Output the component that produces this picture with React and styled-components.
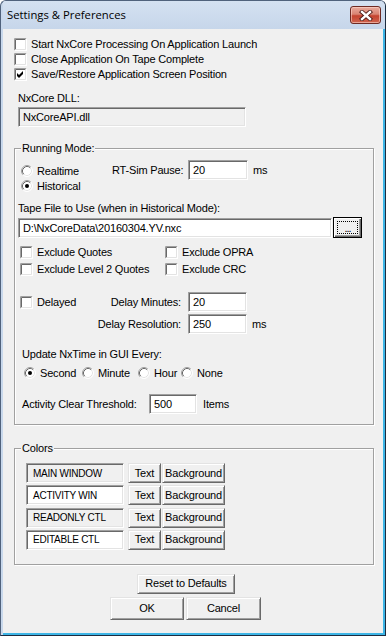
import React from 'react';
import styled, { createGlobalStyle } from 'styled-components';

const GlobalStyle = createGlobalStyle`
  html, body { margin: 0; padding: 0; background: #ffffff; }
  body { font-family: "Liberation Sans", Arial, sans-serif; font-size: 11px; letter-spacing: -0.18px; color: #000; }
  * { box-sizing: border-box; }
`;

const Window = styled.div`
  width: 386px;
  height: 636px;
  display: flex;
  flex-direction: column;
  background: #c8d8ec;
  border: 1px solid #50627c;
  border-right-color: #1c2c40;
  border-bottom-color: #1c2c40;
  border-radius: 6px 6px 0 0;
  padding-left: 2px;
  overflow: hidden;
`;

const TitleBar = styled.div`
  height: 28px;
  flex: none;
  display: flex;
  align-items: flex-start;
  justify-content: space-between;
  padding: 5px 4px 0 4px;
  background: linear-gradient(#d4e1f1, #c6d6ea);
`;

const TitleText = styled.span`
  font-family: "Open Sans", "Noto Sans", sans-serif;
  font-size: 11.3px;
  letter-spacing: 0;
  line-height: 18px;
  color: #000;
`;

const CloseButton = styled.div`
  width: 31px;
  height: 18px;
  border: 1px solid #6e2a23;
  border-radius: 3px;
  background: linear-gradient(#e9aa9d 0%, #d98472 45%, #c4432e 55%, #cf6550 100%);
  box-shadow: inset 0 0 0 1px rgba(255, 220, 210, 0.55);
  display: flex;
  align-items: center;
  justify-content: center;
`;

const Client = styled.div`
  flex: 1;
  display: flex;
  flex-direction: column;
  background: #f0f0f0;
  border-right: 2px solid #3db5e6;
  border-bottom: 2px solid #3db5e6;
  padding: 8px 9px 0 11px;
`;

const CheckRow = styled.label`
  display: flex;
  align-items: center;
  height: ${p => p.$h || 15}px;
  line-height: 13px;
  white-space: nowrap;
`;

const BoxText = styled.span`
  margin-left: ${p => p.$gap ?? 4}px;
`;

const Label = styled.div`
  line-height: 13px;
  margin-top: ${p => p.$mt || 0}px;
  margin-left: ${p => p.$ml || 0}px;
  white-space: nowrap;
`;

const Field = styled.div`
  height: ${p => p.$h || 20}px;
  width: ${p => p.$w}px;
  margin-top: ${p => p.$mt || 0}px;
  margin-left: ${p => p.$ml || 0}px;
  flex: none;
  background: ${p => (p.$readonly ? '#f0f0f0' : '#ffffff')};
  border: 1px solid;
  border-color: #a0a0a0 #ffffff #ffffff #a0a0a0;
  box-shadow: inset 1px 1px 0 #696969, inset -1px -1px 0 #e3e3e3;
  padding-left: 4px;
  display: flex;
  align-items: center;
  line-height: 13px;
  white-space: nowrap;
  overflow: hidden;
`;

const Group = styled.div`
  position: relative;
  margin-top: ${p => p.$mt}px;
  border: 1px solid #a0a0a0;
  box-shadow: inset 1px 1px 0 #ffffff, 1px 1px 0 #ffffff;
  padding: ${p => p.$pad};
  display: flex;
  flex-direction: column;
`;

const Legend = styled.span`
  position: absolute;
  top: -7px;
  left: 6px;
  padding: 0 1px;
  line-height: 13px;
  background: #f0f0f0;
`;

const ModeRow = styled.div`
  display: flex;
  align-items: flex-start;
`;

const RadioColumn = styled.div`
  width: 91px;
  margin-left: 3px;
  margin-top: 3px;
  display: flex;
  flex-direction: column;
`;

const InlineLabel = styled.span`
  width: ${p => p.$w}px;
  line-height: 20px;
  text-align: ${p => p.$align || 'left'};
  flex: none;
  white-space: nowrap;
`;

const Unit = styled.span`
  margin-left: ${p => p.$ml || 5}px;
  line-height: 20px;
`;

const TapeRow = styled.div`
  display: flex;
  align-items: flex-start;
  margin-top: 2px;
`;

const Button = styled.button`
  font: inherit;
  font-family: "Liberation Sans", Arial, sans-serif;
  font-size: 11px;
  letter-spacing: -0.18px;
  color: #000;
  margin: 0;
  margin-top: ${p => p.$mt || 0}px;
  margin-left: ${p => p.$ml || 0}px;
  width: ${p => p.$w}px;
  height: ${p => p.$h || 20}px;
  padding: 0;
  flex: none;
  align-self: flex-start;
  background: #f0f0f0;
  border: 1px solid;
  border-color: #e3e3e3 #696969 #696969 #e3e3e3;
  box-shadow: inset 1px 1px 0 #ffffff, inset -1px -1px 0 #a0a0a0;
  line-height: 13px;
  display: flex;
  align-items: center;
  justify-content: center;
`;

const BrowseButton = styled(Button)`
  border: 1px solid #000;
  box-shadow: inset 1px 1px 0 #ffffff, inset -1px -1px 0 #696969, inset -2px -2px 0 #a0a0a0;
  padding: 3px;
`;

const FocusRect = styled.span`
  flex: 1;
  align-self: stretch;
  border: 1px dotted #000;
  display: flex;
  align-items: flex-end;
  justify-content: center;
  line-height: 9px;
  font-size: 11px;
  letter-spacing: -1px;
`;

const ExcludeGrid = styled.div`
  display: grid;
  grid-template-columns: 145px auto;
  grid-auto-rows: 17px;
  margin-top: 6px;
  margin-left: 2px;
`;

const DelayGrid = styled.div`
  display: grid;
  grid-template-columns: 75px 86px 66px auto;
  grid-auto-rows: 20px;
  row-gap: 2px;
  margin-top: 14px;
  margin-left: 2px;
  align-items: center;
`;

const RadioRow = styled.div`
  display: flex;
  margin-top: 4px;
  margin-left: 6px;
`;

const RadioItem = styled.label`
  display: flex;
  align-items: center;
  height: 15px;
  width: ${p => (p.$w ? `${p.$w}px` : 'auto')};
  flex: none;
  white-space: nowrap;
`;

const ActivityRow = styled.div`
  display: flex;
  align-items: center;
  margin-top: 14px;
  margin-left: 4px;
`;

const ColorRows = styled.div`
  display: flex;
  flex-direction: column;
  gap: 2.33px;
  margin-left: 8px;
`;

const ColorRow = styled.div`
  display: flex;
  align-items: center;
`;

const ColorName = styled(Field)`
  font-size: 10px;
  padding-left: 6px;
  letter-spacing: -0.25px;
`;

const Check = ({ checked }) => (
  <svg width="13" height="13" viewBox="0 0 13 13" style={{ flex: 'none' }}>
    <rect x="0" y="0" width="13" height="13" fill="#ffffff" />
    <path d="M0.5 12.5V0.5H12.5" stroke="#a0a0a0" fill="none" />
    <path d="M1.5 11.5V1.5H11.5" stroke="#696969" fill="none" />
    <path d="M1.5 11.5H11.5V1.5" stroke="#e3e3e3" fill="none" />
    <path d="M0.5 12.5H12.5V0.5" stroke="#ffffff" fill="none" />
    {checked && <path d="M3 5L5 7L9 3L9 6L5 10L3 8Z" fill="#000" />}
  </svg>
);

const Radio = ({ checked }) => (
  <svg width="12" height="12" viewBox="0 0 12 12" style={{ flex: 'none' }}>
    <circle cx="6" cy="6" r="5" fill="#ffffff" />
    <path d="M2.11 9.89A5.5 5.5 0 0 1 9.89 2.11" stroke="#a0a0a0" fill="none" />
    <path d="M2.82 9.18A4.5 4.5 0 0 1 9.18 2.82" stroke="#696969" fill="none" />
    <path d="M9.18 2.82A4.5 4.5 0 0 1 2.82 9.18" stroke="#e3e3e3" fill="none" />
    <path d="M9.89 2.11A5.5 5.5 0 0 1 2.11 9.89" stroke="#ffffff" fill="none" />
    {checked && <circle cx="6" cy="6" r="2" fill="#000" />}
  </svg>
);

const CloseGlyph = () => (
  <svg width="14" height="11" viewBox="0 0 14 11">
    <path d="M3 2L11 9M11 2L3 9" stroke="#4a1a15" strokeWidth="4.2" strokeLinecap="square" />
    <path d="M3 2L11 9M11 2L3 9" stroke="#ffffff" strokeWidth="2.4" strokeLinecap="square" />
  </svg>
);

const colorRows = [
  { name: 'MAIN WINDOW', readonly: true },
  { name: 'ACTIVITY WIN', readonly: false },
  { name: 'READONLY CTL', readonly: true },
  { name: 'EDITABLE CTL', readonly: false },
];

export default function App() {
  return (
    <>
      <GlobalStyle />
      <Window>
        <TitleBar>
          <TitleText>Settings &amp; Preferences</TitleText>
          <CloseButton>
            <CloseGlyph />
          </CloseButton>
        </TitleBar>
        <Client>
          <CheckRow><Check /><BoxText>Start NxCore Processing On Application Launch</BoxText></CheckRow>
          <CheckRow><Check /><BoxText>Close Application On Tape Complete</BoxText></CheckRow>
          <CheckRow><Check checked /><BoxText>Save/Restore Application Screen Position</BoxText></CheckRow>

          <Label $mt={10} $ml={4}>NxCore DLL:</Label>
          <Field $readonly $w={228} $mt={2} $ml={4}>NxCoreAPI.dll</Field>

          <Group $mt={21} $pad="11px 0 10px 3px">
            <Legend>Running Mode:</Legend>
            <ModeRow>
              <RadioColumn>
                <RadioItem><Radio /><BoxText>Realtime</BoxText></RadioItem>
                <RadioItem><Radio checked /><BoxText>Historical</BoxText></RadioItem>
              </RadioColumn>
              <InlineLabel $w={76}>RT-Sim Pause:</InlineLabel>
              <Field $w={60}>20</Field>
              <Unit>ms</Unit>
            </ModeRow>

            <Label $mt={9}>Tape File to Use (when in Historical Mode):</Label>
            <TapeRow>
              <Field $w={314} $mt={1}>D:\NxCoreData\20160304.YV.nxc</Field>
              <BrowseButton $w={29} $h={21} $ml={1}>
                <FocusRect>...</FocusRect>
              </BrowseButton>
            </TapeRow>

            <ExcludeGrid>
              <CheckRow $h={17}><Check /><BoxText>Exclude Quotes</BoxText></CheckRow>
              <CheckRow $h={16}><Check /><BoxText>Exclude OPRA</BoxText></CheckRow>
              <CheckRow $h={17}><Check /><BoxText>Exclude Level 2 Quotes</BoxText></CheckRow>
              <CheckRow $h={16}><Check /><BoxText>Exclude CRC</BoxText></CheckRow>
            </ExcludeGrid>

            <DelayGrid>
              <CheckRow><Check /><BoxText>Delayed</BoxText></CheckRow>
              <InlineLabel $w={86} $align="right">Delay Minutes:</InlineLabel>
              <Field $w={59} $ml={7}>20</Field>
              <span />
              <span />
              <InlineLabel $w={86} $align="right">Delay Resolution:</InlineLabel>
              <Field $w={59} $ml={7}>250</Field>
              <Unit $ml={0}>ms</Unit>
            </DelayGrid>

            <Label $mt={14} $ml={4}>Update NxTime in GUI Every:</Label>
            <RadioRow>
              <RadioItem $w={58}><Radio checked /><BoxText>Second</BoxText></RadioItem>
              <RadioItem $w={56}><Radio /><BoxText>Minute</BoxText></RadioItem>
              <RadioItem $w={43}><Radio /><BoxText>Hour</BoxText></RadioItem>
              <RadioItem><Radio /><BoxText>None</BoxText></RadioItem>
            </RadioRow>

            <ActivityRow>
              <InlineLabel $w={127}>Activity Clear Threshold:</InlineLabel>
              <Field $w={48}>500</Field>
              <Unit $ml={6}>Items</Unit>
            </ActivityRow>
          </Group>

          <Group $mt={23} $pad="14px 0 14px 3px">
            <Legend>Colors</Legend>
            <ColorRows>
              {colorRows.map(r => (
                <ColorRow key={r.name}>
                  <ColorName $w={98} $readonly={r.readonly}>{r.name}</ColorName>
                  <Button $w={33} $ml={4}>Text</Button>
                  <Button $w={63} $ml={1}>Background</Button>
                </ColorRow>
              ))}
            </ColorRows>
          </Group>

          <Button $w={98} $h={20} $mt={9} $ml={123}>Reset to Defaults</Button>
          <ColorRow>
            <Button $w={74} $h={23} $mt={3} $ml={96}>OK</Button>
            <Button $w={75} $h={23} $mt={3} $ml={2}>Cancel</Button>
          </ColorRow>
        </Client>
      </Window>
    </>
  );
}
